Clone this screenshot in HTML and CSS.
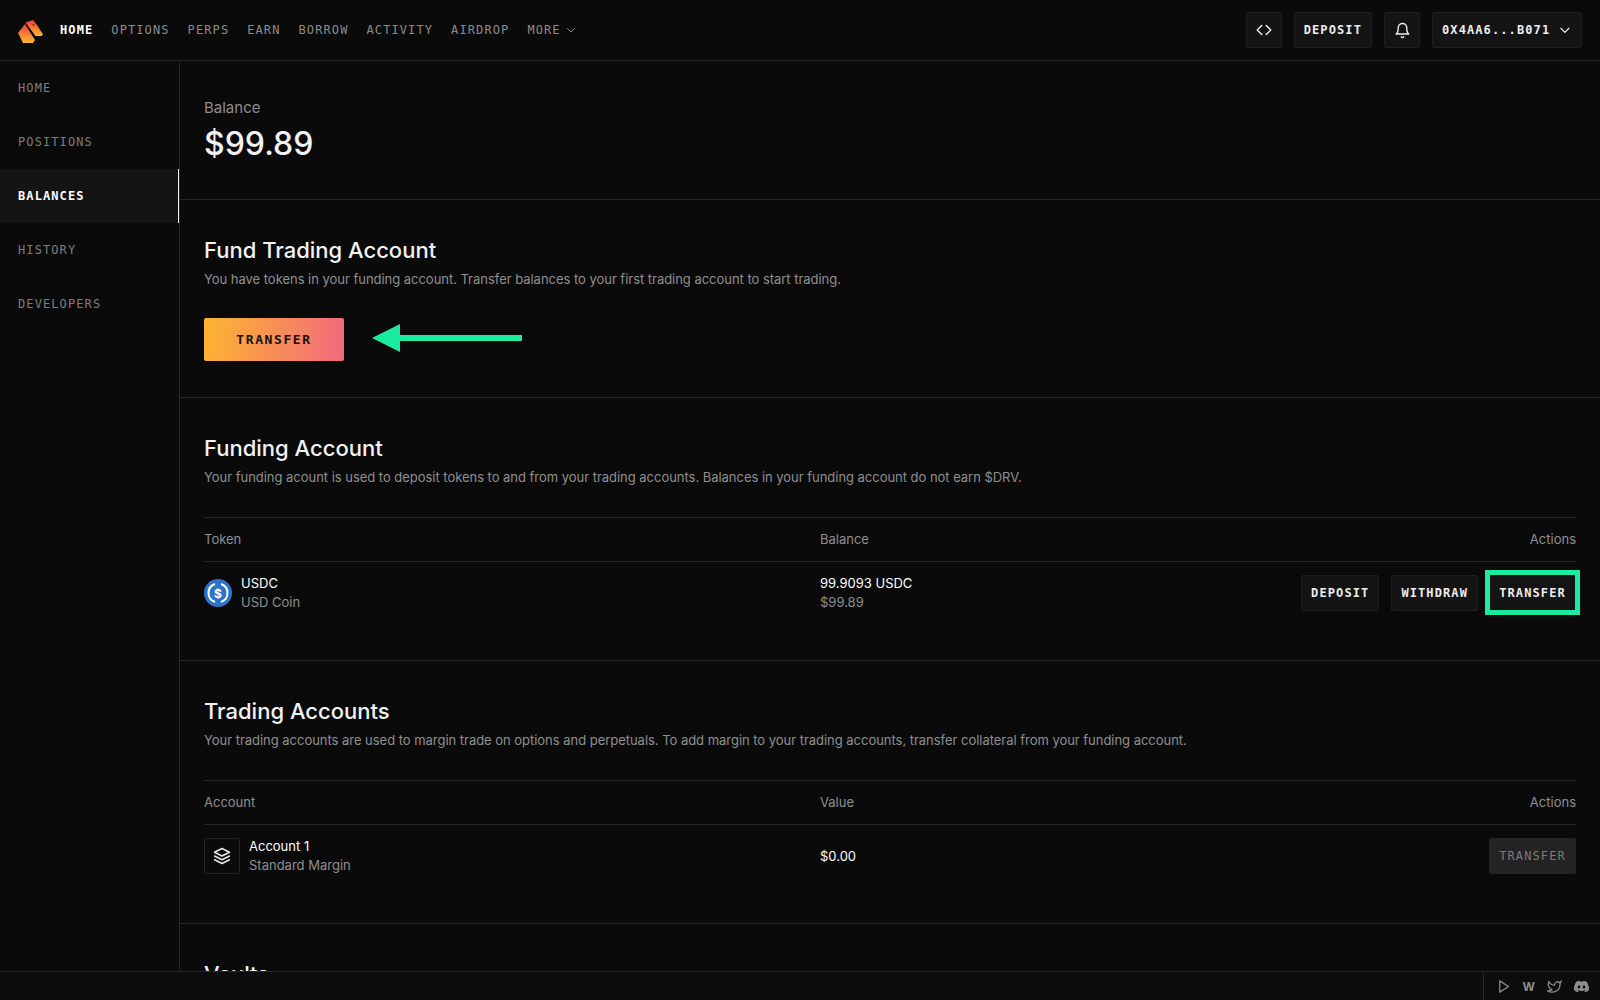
FILE: index.html
```html
<!DOCTYPE html>
<html lang="en">
<head>
  <meta charset="utf-8" />
  <title>Balances</title>
  <link rel="stylesheet" href="styles.css">
</head>
<body>

<header class="topbar">
  <svg class="logo" viewBox="0 0 25 23" width="25" height="23">
    <defs>
      <linearGradient id="logograd" x1="0" y1="0" x2="0" y2="1">
        <stop offset="0" stop-color="#ee3f3a" />
        <stop offset="1" stop-color="#fdb82f" />
      </linearGradient>
    </defs>
    <path fill="url(#logograd)" d="M0 13 7 4 17 20 15 23H5z" />
    <path fill="url(#logograd)" d="M7.500 2.500 15 0 19 5 25 14.500 23.500 16H17.500z" />
    <circle cx="15.500" cy="5" r="0.8" fill="#0a0a0a" />
  </svg>
  <nav class="mainnav">
    <a class="active">HOME</a>
    <a>OPTIONS</a>
    <a>PERPS</a>
    <a>EARN</a>
    <a>BORROW</a>
    <a>ACTIVITY</a>
    <a>AIRDROP</a>
    <a class="more">MORE
      <svg class="icon" viewBox="0 0 24 24" width="12" height="12"><path d="M5 9l7 7 7-7" /></svg>
    </a>
  </nav>
  <div class="topactions">
    <button class="btn square">
      <svg class="icon" viewBox="0 0 24 24" width="18" height="18"><path d="M9 6l-6 6 6 6M15 6l6 6-6 6" /></svg>
    </button>
    <button class="btn">DEPOSIT</button>
    <button class="btn square">
      <svg class="icon" viewBox="0 0 24 24" width="17" height="17"><path d="M18 8A6 6 0 0 0 6 8c0 7-3 9-3 9h18s-3-2-3-9" /><path d="M13.730 21a2 2 0 0 1-3.460 0" /></svg>
    </button>
    <button class="btn account">0X4AA6...B071
      <svg class="icon" viewBox="0 0 24 24" width="16" height="16"><path d="M5 9l7 7 7-7" /></svg>
    </button>
  </div>
</header>

<div class="middle">
  <aside class="sidebar">
    <a>HOME</a>
    <a>POSITIONS</a>
    <a class="active">BALANCES</a>
    <a>HISTORY</a>
    <a>DEVELOPERS</a>
  </aside>

  <main class="content">
    <section class="section">
      <div class="balance-label">Balance</div>
      <div class="balance-value">$99.89</div>
    </section>

    <section class="section">
      <h2>Fund Trading Account</h2>
      <p>You have tokens in your funding account. Transfer balances to your first trading account to start trading.</p>
      <div class="cta">
        <button class="btn-gradient">TRANSFER</button>
        <svg class="arrow" viewBox="0 0 150 28" width="150" height="28">
          <path d="M0 14 28 0V11H150V17H28V28z" />
        </svg>
      </div>
    </section>

    <section class="section">
      <h2>Funding Account</h2>
      <p>Your funding acount is used to deposit tokens to and from your trading accounts. Balances in your funding account do not earn $DRV.</p>
      <div class="table">
        <div class="row head">
          <div>Token</div>
          <div>Balance</div>
          <div class="right">Actions</div>
        </div>
        <div class="row">
          <div class="asset">
            <svg class="usdc" viewBox="0 0 28 28" width="28" height="28">
              <circle cx="14" cy="14" r="14" fill="#2d74c8" />
              <path d="M11 5a9.500 9.500 0 0 0 0 18M17 5a9.500 9.500 0 0 1 0 18" fill="none" stroke="#fff" stroke-width="2" />
              <text x="14" y="18.500" text-anchor="middle" class="usdc-mark">$</text>
            </svg>
            <div>
              <div class="name">USDC</div>
              <div class="sub">USD Coin</div>
            </div>
          </div>
          <div>
            <div class="name">99.9093 USDC</div>
            <div class="sub">$99.89</div>
          </div>
          <div class="actions">
            <button class="btn">DEPOSIT</button>
            <button class="btn">WITHDRAW</button>
            <button class="btn marked">TRANSFER</button>
          </div>
        </div>
      </div>
    </section>

    <section class="section">
      <h2>Trading Accounts</h2>
      <p>Your trading accounts are used to margin trade on options and perpetuals. To add margin to your trading accounts, transfer collateral from your funding account.</p>
      <div class="table">
        <div class="row head">
          <div>Account</div>
          <div>Value</div>
          <div class="right">Actions</div>
        </div>
        <div class="row">
          <div class="asset wide">
            <span class="stack">
              <svg class="icon" viewBox="0 0 24 24" width="18" height="18"><path d="M12 2 2 7l10 5 10-5-10-5z" /><path d="M2 17l10 5 10-5" /><path d="M2 12l10 5 10-5" /></svg>
            </span>
            <div>
              <div class="name">Account 1</div>
              <div class="sub">Standard Margin</div>
            </div>
          </div>
          <div class="name">$0.00</div>
          <div class="actions">
            <button class="btn disabled">TRANSFER</button>
          </div>
        </div>
      </div>
    </section>

    <section class="section">
      <h2>Vaults</h2>
    </section>
  </main>
</div>

<footer class="footer">
  <div class="socials">
    <svg class="icon" viewBox="0 0 24 24" width="15" height="15"><path d="M6 3l14 9-14 9z" /></svg>
    <span class="wiki">W</span>
    <svg class="icon" viewBox="0 0 24 24" width="15" height="15"><path d="M23 3a10.900 10.900 0 0 1-3 3 4.480 4.480 0 0 0-7.860 3v1A10.660 10.660 0 0 1 3 4s-4 9 5 13a11.640 11.640 0 0 1-7 2c9 5 20 0 20-11.500a4.500 4.500 0 0 0-.08-.83A7.720 7.720 0 0 0 23 3z" /></svg>
    <svg class="discord" viewBox="0 0 24 24" width="15" height="15"><path d="M20.317 4.370a19.790 19.790 0 0 0-4.885-1.515.074.074 0 0 0-.079.037c-.211.375-.445.865-.608 1.250-1.845-.276-3.680-.276-5.487 0-.164-.393-.406-.874-.618-1.250a.077.077 0 0 0-.079-.037 19.736 19.736 0 0 0-4.885 1.515.070.070 0 0 0-.032.028C.533 9.046-.319 13.580.099 18.058a.082.082 0 0 0 .031.056c2.053 1.508 4.041 2.423 5.993 3.029a.078.078 0 0 0 .084-.028c.462-.630.873-1.295 1.226-1.994a.076.076 0 0 0-.042-.106c-.653-.248-1.274-.550-1.872-.892a.077.077 0 0 1-.008-.128c.126-.094.252-.192.372-.291a.074.074 0 0 1 .078-.011c3.928 1.793 8.180 1.793 12.061 0a.074.074 0 0 1 .079.010c.120.099.246.198.373.292a.077.077 0 0 1-.007.128c-.598.349-1.219.645-1.873.891a.077.077 0 0 0-.041.107c.360.698.772 1.363 1.225 1.993a.076.076 0 0 0 .084.029c1.961-.607 3.950-1.522 6.002-3.029a.077.077 0 0 0 .031-.055c.500-5.177-.838-9.674-3.548-13.660a.061.061 0 0 0-.031-.029zM8.020 15.331c-1.183 0-2.157-1.086-2.157-2.419 0-1.333.956-2.419 2.157-2.419 1.211 0 2.176 1.095 2.157 2.419 0 1.333-.956 2.419-2.157 2.419zm7.975 0c-1.183 0-2.157-1.086-2.157-2.419 0-1.333.955-2.419 2.157-2.419 1.211 0 2.176 1.095 2.157 2.419 0 1.333-.946 2.419-2.157 2.419z" /></svg>
  </div>
</footer>

</body>
</html>
```
FILE: styles.css
```css
* {
  box-sizing: border-box;
}

html, body {
  height: 100%;
}

body {
  margin: 0;
  display: flex;
  flex-direction: column;
  overflow: hidden;
  background-color: #0a0a0a;
  color: #f2f2f2;
  font-family: "Inter", "Liberation Sans", sans-serif;
}

.icon {
  fill: none;
  stroke: currentColor;
  stroke-width: 2;
  stroke-linecap: round;
  stroke-linejoin: round;
}

/* top bar */

.topbar {
  flex: none;
  display: flex;
  align-items: center;
  height: 61px;
  padding: 0 18px;
  border-bottom: 1px solid #262626;
}

.logo {
  flex: none;
  margin-right: 17px;
  margin-top: 3px;
}

.mainnav {
  display: flex;
  align-items: center;
  gap: 18px;
  font: 12px "DejaVu Sans Mono", monospace;
  letter-spacing: 1.1px;
  color: #8a8a8a;
}

.mainnav .active {
  color: #fff;
  font-weight: 700;
}

.mainnav .more {
  display: flex;
  align-items: center;
  gap: 4px;
}

.topactions {
  display: flex;
  gap: 12px;
  margin-left: auto;
}

.btn {
  display: inline-flex;
  align-items: center;
  justify-content: center;
  height: 36px;
  padding: 0 9px;
  border: 1px solid #1f1f1f;
  border-radius: 2px;
  background-color: #141414;
  color: #ececec;
  font: 700 12px "DejaVu Sans Mono", monospace;
  letter-spacing: 1.1px;
}

.btn.square {
  width: 36px;
  padding: 0;
}

.btn.account {
  width: 150px;
  gap: 8px;
}

.btn.marked {
  width: 85px;
  height: 35px;
  margin-right: 1px;
  padding: 0;
  border: 0;
  border-radius: 0;
  outline: 5px solid #1aeb9e;
}

.btn.disabled {
  width: 87px;
  padding: 0;
  background-color: #232323;
  border-color: #232323;
  color: #7b7b7b;
  font-weight: 400;
}

/* sidebar + content */

.middle {
  flex: 1;
  min-height: 0;
  display: flex;
}

.sidebar {
  flex: none;
  width: 180px;
  border-right: 1px solid #262626;
}

.sidebar a {
  display: flex;
  align-items: center;
  height: 54px;
  padding-left: 18px;
  font: 12px "DejaVu Sans Mono", monospace;
  letter-spacing: 1.1px;
  color: #7d7d7d;
}

.sidebar a.active {
  background-color: #141414;
  border-right: 1px solid #f2f2f2;
  color: #fff;
  font-weight: 700;
}

.content {
  flex: 1;
  min-width: 0;
  overflow: hidden;
}

.section {
  padding: 36px 24px 36px;
  border-bottom: 1px solid #262626;
}

.balance-label {
  font-size: 15px;
  line-height: 22px;
  color: #8f8f8f;
}

.balance-value {
  margin-top: 5px;
  margin-bottom: -1px;
  font-size: 32px;
  font-weight: 500;
  line-height: 40px;
}

h2 {
  margin: 0;
  font-size: 22px;
  font-weight: 500;
  line-height: 28px;
}

.section p {
  margin: 5px 0 0;
  font-size: 13px;
  letter-spacing: -0.03px;
  line-height: 20px;
  color: #8f8f8f;
}

.cta {
  display: flex;
  align-items: center;
  gap: 28px;
  margin-top: 29px;
}

.btn-gradient {
  width: 140px;
  height: 43px;
  border: 0;
  border-radius: 2px;
  background: linear-gradient(100deg, #fdb62f, #f2687f);
  color: #1a1209;
  font: 700 13px "DejaVu Sans Mono", monospace;
  letter-spacing: 1.6px;
}

.arrow {
  fill: #1aeb9e;
  margin-top: -3px;
}

/* tables */

.table {
  margin-top: 30px;
  border-top: 1px solid #262626;
}

.row {
  display: grid;
  grid-template-columns: 616px 1fr auto;
  align-items: center;
  height: 62px;
  font-size: 13px;
}

.row.head {
  height: 44px;
  padding-bottom: 2px;
  border-bottom: 1px solid #262626;
  color: #8f8f8f;
}

.right {
  text-align: right;
}

.asset {
  display: flex;
  align-items: center;
  gap: 9px;
}

.usdc-mark {
  fill: #fff;
  font: 700 12px "Inter", sans-serif;
}

.stack {
  display: flex;
  align-items: center;
  justify-content: center;
  width: 36px;
  height: 36px;
  border: 1px solid #232323;
  border-radius: 2px;
  color: #e8e8e8;
}

.name {
  line-height: 19px;
  color: #fff;
}

.sub {
  line-height: 19px;
  color: #8f8f8f;
}

.actions {
  display: flex;
  gap: 12px;
}

/* footer */

.footer {
  flex: none;
  display: flex;
  justify-content: flex-end;
  height: 29px;
  border-top: 1px solid #262626;
  background-color: #0c0c0c;
}

.socials {
  display: flex;
  align-items: center;
  gap: 12px;
  padding: 0 11px 0 12px;
  border-left: 1px solid #262626;
  color: #8d8d8d;
}

.wiki {
  font: 700 12px "Inter", sans-serif;
}

.discord {
  fill: currentColor;
}
```
